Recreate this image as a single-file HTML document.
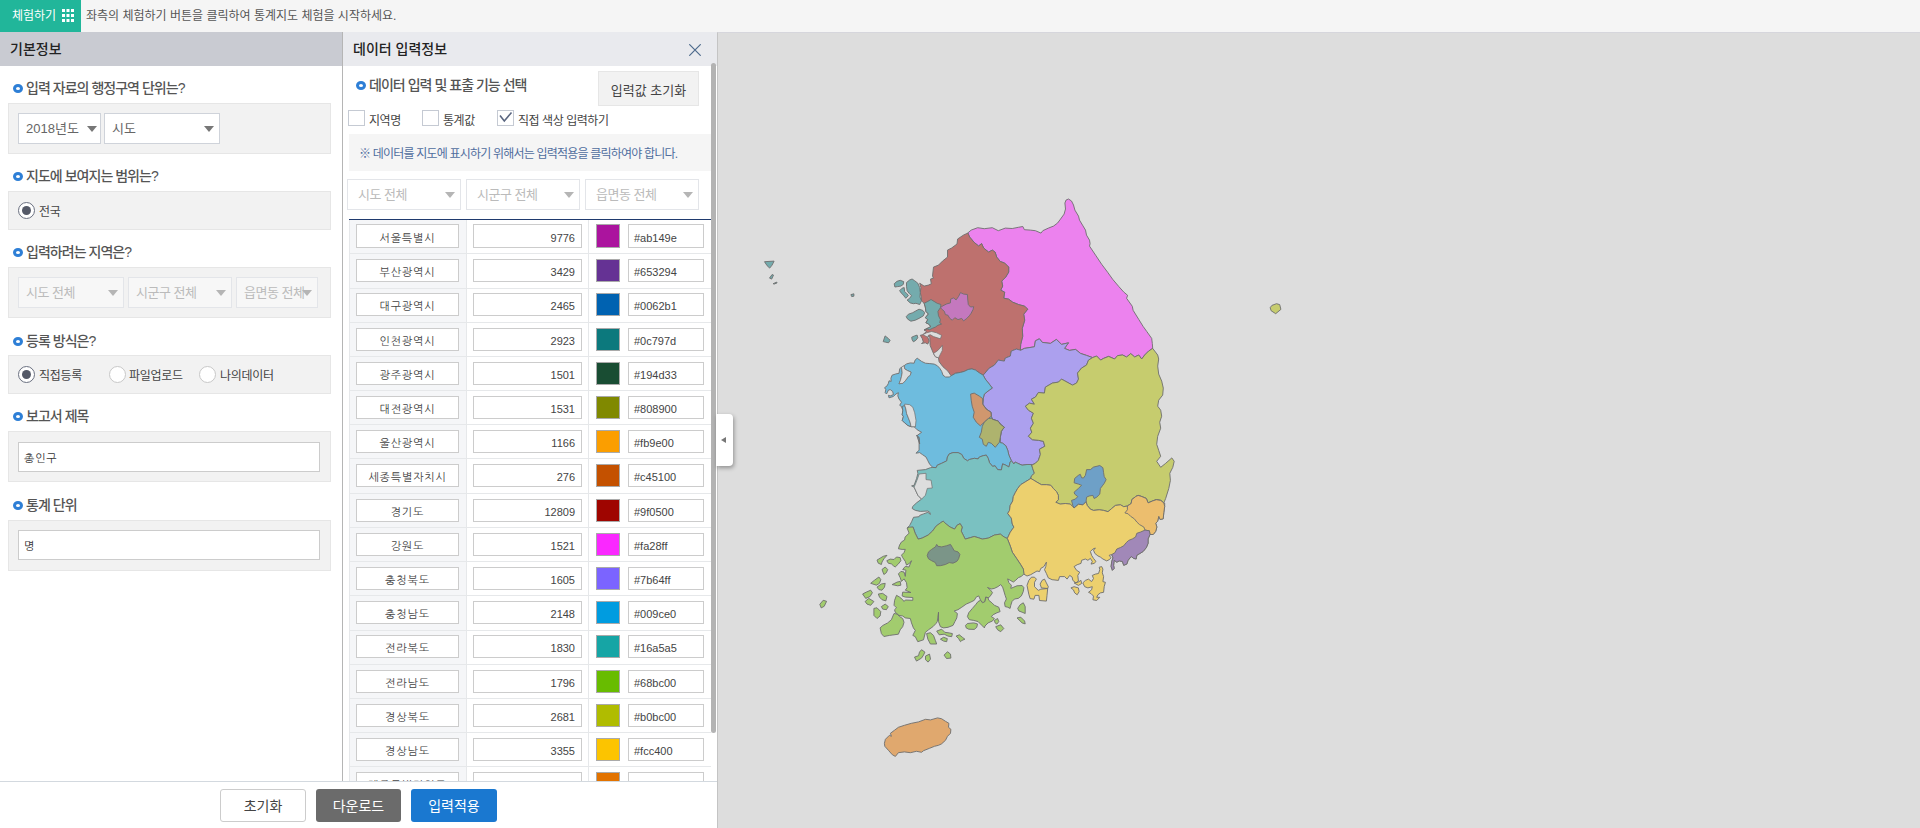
<!DOCTYPE html>
<html lang="ko">
<head>
<meta charset="utf-8">
<title>통계지도 체험</title>
<style>
*{box-sizing:border-box;margin:0;padding:0}
html,body{width:1920px;height:828px;overflow:hidden;background:#fff}
body{font-family:"Liberation Sans","Noto Sans CJK KR","NanumGothic",sans-serif;font-size:12px;color:#333;position:relative}
.abs{position:absolute}
#topbar{left:0;top:0;width:1920px;height:32px;background:#f5f5f5}
#trybtn{left:0;top:0;width:81px;height:32px;background:#21b69a;color:#fff;font-size:12px;line-height:32px;padding-left:12px}
#trybtn svg{position:absolute;left:62px;top:9px}
#toptext{left:86px;top:0;height:32px;line-height:32px;font-size:12px;color:#555}
#left{left:0;top:32px;width:342px;height:750px;background:#fff}
#lefthead{left:0;top:32px;width:343px;height:34px;background:#c9cbd2;font-size:14px;font-weight:500;line-height:34px;padding-left:10px;color:#222}
#vline{left:342px;top:32px;width:1px;height:750px;background:#b5b5b5}
.sec{position:absolute;left:13px;font-size:14px;font-weight:500;color:#555;line-height:20px;white-space:nowrap;letter-spacing:-.97px}
.sec i{display:inline-block;width:10px;height:9px;border:3px solid #2e7fd6;border-radius:50%;vertical-align:0;margin-right:3px}
.gbox{position:absolute;left:8px;width:323px;background:#f2f2f2;border:1px solid #e6e6e6}
.sel{position:absolute;height:31px;background:#fff;border:1px solid #cfd3da;font-size:13px;color:#666;line-height:29px;padding-left:7px;white-space:nowrap;overflow:hidden}
.sel:after{content:"";position:absolute;right:5px;top:12px;border:5px solid transparent;border-top:6px solid #777;border-bottom:0}
.sel.a1:after{right:3px}
.sel.dis{letter-spacing:-.5px;color:#bbb;border-color:#e3e5e9;background:#f7f7f7}
.sel.dis:after{border-top-color:#b5b5b5}
.radio{position:absolute;width:17px;height:17px;border:1px solid #6a7080;border-radius:50%;background:#fff}
.radio.on:after{content:"";position:absolute;left:3px;top:3px;width:9px;height:9px;border-radius:50%;background:#555a68}
.radio.off{border-color:#c8c8c8}
.rl{position:absolute;font-size:12px;color:#444;line-height:16px;white-space:nowrap;letter-spacing:-.3px}
.tin{position:absolute;left:18px;width:302px;height:30px;border:1px solid #ccc;background:#fff;font-size:11px;line-height:30px;padding-left:5px;letter-spacing:.8px;color:#333;font-family:"Liberation Sans","NanumGothic",sans-serif}
#data{left:343px;top:32px;width:374px;height:750px;background:#fff}
#datahead{left:343px;top:32px;width:374px;height:34px;background:#e9eaee;font-size:14px;font-weight:500;line-height:34px;padding-left:10px;color:#222}
#mapwrap{left:717px;top:32px;width:1203px;height:796px;background:#ddd;border-left:1px solid #c4c4c4;border-top:1px solid #d6d6dc}
#bottom{left:0;top:781px;width:717px;height:47px;background:#fff;border-top:1px solid #d3d9df}
.btn{position:absolute;top:7px;height:33px;border-radius:3px;font-size:14px;line-height:35px;text-align:center}
.chk{position:absolute;top:110px;width:17px;height:16px;border:1px solid #c5cad3;background:#fff}
.cl{position:absolute;top:113px;font-size:12px;line-height:17px;color:#444;white-space:nowrap;letter-spacing:-.45px}
.tr{position:absolute;left:349px;width:362px}
.tr>div{position:absolute;top:0;bottom:0}
.c1{left:0;width:118px;background:#f5f6f8;border-left:1px solid #e6e8ea;border-right:1px solid #e6e8ea}
.c2{left:118px;width:122px;border-right:1px solid #e6e8ea}
.c3{left:240px;width:122px}
.inp{position:absolute;top:var(--t);height:var(--h);border:1px solid #ccc;background:#fff;font-size:11px;line-height:var(--lh);color:#444;white-space:nowrap;font-family:"Liberation Sans","NanumGothic",sans-serif}
.i1{left:6px;width:103px;text-align:center;letter-spacing:.9px}
.i2{left:6px;width:109px;text-align:right;padding-right:6px}
.i3{left:39px;width:76px;padding-left:5px}
.sw{position:absolute;left:7px;top:var(--t);width:24px;height:var(--h);border:1px solid #aaa}
</style>
</head>
<body>
<div id="topbar" class="abs"></div>
<div id="trybtn" class="abs">체험하기<svg width="12" height="13" viewBox="0 0 12 13"><g fill="#fff"><rect x="0" y="0" width="3" height="3"/><rect x="4.5" y="0" width="3" height="3"/><rect x="9" y="0" width="3" height="3"/><rect x="0" y="5" width="3" height="3"/><rect x="4.5" y="5" width="3" height="3"/><rect x="9" y="5" width="3" height="3"/><rect x="0" y="10" width="3" height="3"/><rect x="4.5" y="10" width="3" height="3"/><rect x="9" y="10" width="3" height="3"/></g></svg></div>
<div id="toptext" class="abs">좌측의 체험하기 버튼을 클릭하여 통계지도 체험을 시작하세요.</div>

<div id="left" class="abs"></div>
<div id="lefthead" class="abs">기본정보</div>

<div class="sec" style="top:78px"><i></i>입력 자료의 행정구역 단위는?</div>
<div class="gbox" style="top:103px;height:51px"></div>
<div class="sel a1" style="left:18px;top:113px;width:83px">2018년도</div>
<div class="sel" style="left:104px;top:113px;width:116px">시도</div>

<div class="sec" style="top:166px"><i></i>지도에 보여지는 범위는?</div>
<div class="gbox" style="top:191px;height:39px"></div>
<div class="radio on" style="left:18px;top:202px"></div><div class="rl" style="left:39px;top:204px">전국</div>

<div class="sec" style="top:242px"><i></i>입력하려는 지역은?</div>
<div class="gbox" style="top:267px;height:51px"></div>
<div class="sel dis" style="left:18px;top:277px;width:106px">시도 전체</div>
<div class="sel dis" style="left:128px;top:277px;width:104px">시군구 전체</div>
<div class="sel dis" style="left:236px;top:277px;width:82px">읍면동 전체</div>

<div class="sec" style="top:331px"><i></i>등록 방식은?</div>
<div class="gbox" style="top:355px;height:39px"></div>
<div class="radio on" style="left:18px;top:366px"></div><div class="rl" style="left:39px;top:368px">직접등록</div>
<div class="radio off" style="left:109px;top:366px"></div><div class="rl" style="left:129px;top:368px">파일업로드</div>
<div class="radio off" style="left:199px;top:366px"></div><div class="rl" style="left:220px;top:368px">나의데이터</div>

<div class="sec" style="top:406px"><i></i>보고서 제목</div>
<div class="gbox" style="top:431px;height:51px"></div>
<div class="tin" style="top:442px">총인구</div>

<div class="sec" style="top:495px"><i></i>통계 단위</div>
<div class="gbox" style="top:520px;height:51px"></div>
<div class="tin" style="top:530px">명</div>

<div id="data" class="abs"></div>
<div id="datahead" class="abs">데이터 입력정보</div>
<svg class="abs" style="left:689px;top:44px" width="12" height="12" viewBox="0 0 12 12"><path d="M0.3 0.3L11.7 11.7M11.7 0.3L0.3 11.7" stroke="#4d6a8c" stroke-width="1.2" fill="none"/></svg>
<div id="vline" class="abs"></div>

<div class="sec" style="left:356px;top:75px"><i></i>데이터 입력 및 표출 기능 선택</div>
<div class="abs" style="left:598px;top:71px;width:101px;height:35px;background:#f2f2f2;border:1px solid #e6e6e6;font-size:13px;line-height:37px;text-align:center;color:#444">입력값 초기화</div>
<div class="chk" style="left:348px"></div><div class="cl" style="left:369px">지역명</div>
<div class="chk" style="left:422px"></div><div class="cl" style="left:443px">통계값</div>
<div class="chk" style="left:497px"><svg width="16" height="14" viewBox="0 0 16 14" style="position:absolute;left:-1px;top:-1px;overflow:visible"><path d="M3 5.5L7.3 11L14.5 2.5" stroke="#5a6680" stroke-width="1.6" fill="none"/></svg></div><div class="cl" style="left:518px">직접 색상 입력하기</div>
<div class="abs" style="left:349px;top:134px;width:362px;height:37px;background:#f5f5f5;font-size:12px;line-height:40px;padding-left:10px;color:#4f6d9e;white-space:nowrap;letter-spacing:-.8px">※ 데이터를 지도에 표시하기 위해서는 입력적용을 클릭하여야 합니다.</div>
<div class="sel dis" style="left:347px;top:179px;width:114px;background:#fff;padding-left:10px">시도 전체</div>
<div class="sel dis" style="left:466px;top:179px;width:114px;background:#fff;padding-left:10px">시군구 전체</div>
<div class="sel dis" style="left:585px;top:179px;width:114px;background:#fff;padding-left:10px">읍면동 전체</div>
<div class="abs" style="left:349px;top:219px;width:362px;height:1px;background:#1f3a6e"></div>
<div class="tr" style="top:220px;height:33px;--t:4px;--h:24px;--lh:26px"><div class="c1"><span class="inp i1">서울특별시</span></div><div class="c2"><span class="inp i2">9776</span></div><div class="c3"><i class="sw" style="background:#ab149e"></i><span class="inp i3">#ab149e</span></div></div>
<div class="tr" style="top:253px;height:35px;border-top:1px solid #e6e8ea;--t:5px;--h:23px;--lh:24px"><div class="c1"><span class="inp i1">부산광역시</span></div><div class="c2"><span class="inp i2">3429</span></div><div class="c3"><i class="sw" style="background:#653294"></i><span class="inp i3">#653294</span></div></div>
<div class="tr" style="top:288px;height:34px;border-top:1px solid #e6e8ea;--t:4px;--h:23px;--lh:24px"><div class="c1"><span class="inp i1">대구광역시</span></div><div class="c2"><span class="inp i2">2465</span></div><div class="c3"><i class="sw" style="background:#0062b1"></i><span class="inp i3">#0062b1</span></div></div>
<div class="tr" style="top:322px;height:34px;border-top:1px solid #e6e8ea;--t:5px;--h:23px;--lh:24px"><div class="c1"><span class="inp i1">인천광역시</span></div><div class="c2"><span class="inp i2">2923</span></div><div class="c3"><i class="sw" style="background:#0c797d"></i><span class="inp i3">#0c797d</span></div></div>
<div class="tr" style="top:356px;height:34px;border-top:1px solid #e6e8ea;--t:5px;--h:23px;--lh:24px"><div class="c1"><span class="inp i1">광주광역시</span></div><div class="c2"><span class="inp i2">1501</span></div><div class="c3"><i class="sw" style="background:#194d33"></i><span class="inp i3">#194d33</span></div></div>
<div class="tr" style="top:390px;height:34px;border-top:1px solid #e6e8ea;--t:5px;--h:23px;--lh:24px"><div class="c1"><span class="inp i1">대전광역시</span></div><div class="c2"><span class="inp i2">1531</span></div><div class="c3"><i class="sw" style="background:#808900"></i><span class="inp i3">#808900</span></div></div>
<div class="tr" style="top:424px;height:34px;border-top:1px solid #e6e8ea;--t:5px;--h:23px;--lh:24px"><div class="c1"><span class="inp i1">울산광역시</span></div><div class="c2"><span class="inp i2">1166</span></div><div class="c3"><i class="sw" style="background:#fb9e00"></i><span class="inp i3">#fb9e00</span></div></div>
<div class="tr" style="top:458px;height:35px;border-top:1px solid #e6e8ea;--t:5px;--h:23px;--lh:24px"><div class="c1"><span class="inp i1">세종특별자치시</span></div><div class="c2"><span class="inp i2">276</span></div><div class="c3"><i class="sw" style="background:#c45100"></i><span class="inp i3">#c45100</span></div></div>
<div class="tr" style="top:493px;height:34px;border-top:1px solid #e6e8ea;--t:5px;--h:23px;--lh:24px"><div class="c1"><span class="inp i1">경기도</span></div><div class="c2"><span class="inp i2">12809</span></div><div class="c3"><i class="sw" style="background:#9f0500"></i><span class="inp i3">#9f0500</span></div></div>
<div class="tr" style="top:527px;height:34px;border-top:1px solid #e6e8ea;--t:5px;--h:23px;--lh:24px"><div class="c1"><span class="inp i1">강원도</span></div><div class="c2"><span class="inp i2">1521</span></div><div class="c3"><i class="sw" style="background:#fa28ff"></i><span class="inp i3">#fa28ff</span></div></div>
<div class="tr" style="top:561px;height:34px;border-top:1px solid #e6e8ea;--t:5px;--h:23px;--lh:24px"><div class="c1"><span class="inp i1">충청북도</span></div><div class="c2"><span class="inp i2">1605</span></div><div class="c3"><i class="sw" style="background:#7b64ff"></i><span class="inp i3">#7b64ff</span></div></div>
<div class="tr" style="top:595px;height:35px;border-top:1px solid #e6e8ea;--t:5px;--h:23px;--lh:24px"><div class="c1"><span class="inp i1">충청남도</span></div><div class="c2"><span class="inp i2">2148</span></div><div class="c3"><i class="sw" style="background:#009ce0"></i><span class="inp i3">#009ce0</span></div></div>
<div class="tr" style="top:630px;height:34px;border-top:1px solid #e6e8ea;--t:4px;--h:23px;--lh:24px"><div class="c1"><span class="inp i1">전라북도</span></div><div class="c2"><span class="inp i2">1830</span></div><div class="c3"><i class="sw" style="background:#16a5a5"></i><span class="inp i3">#16a5a5</span></div></div>
<div class="tr" style="top:664px;height:34px;border-top:1px solid #e6e8ea;--t:5px;--h:23px;--lh:24px"><div class="c1"><span class="inp i1">전라남도</span></div><div class="c2"><span class="inp i2">1796</span></div><div class="c3"><i class="sw" style="background:#68bc00"></i><span class="inp i3">#68bc00</span></div></div>
<div class="tr" style="top:698px;height:34px;border-top:1px solid #e6e8ea;--t:5px;--h:23px;--lh:24px"><div class="c1"><span class="inp i1">경상북도</span></div><div class="c2"><span class="inp i2">2681</span></div><div class="c3"><i class="sw" style="background:#b0bc00"></i><span class="inp i3">#b0bc00</span></div></div>
<div class="tr" style="top:732px;height:34px;border-top:1px solid #e6e8ea;--t:5px;--h:23px;--lh:24px"><div class="c1"><span class="inp i1">경상남도</span></div><div class="c2"><span class="inp i2">3355</span></div><div class="c3"><i class="sw" style="background:#fcc400"></i><span class="inp i3">#fcc400</span></div></div>
<div class="tr" style="top:766px;height:34px;border-top:1px solid #e6e8ea;--t:5px;--h:23px;--lh:24px"><div class="c1"><span class="inp i1">제주특별자치도</span></div><div class="c2"><span class="inp i2">667</span></div><div class="c3"><i class="sw" style="background:#e27300"></i><span class="inp i3">#e27300</span></div></div>
<div class="abs" style="left:711px;top:63px;width:5px;height:670px;background:#b3b3b3;border-radius:3px"></div>

<div id="mapwrap" class="abs"></div>
<svg class="abs" id="map" style="left:0;top:0" width="1920" height="828" viewBox="0 0 1920 828"><g stroke="#6e6e6e" stroke-width="0.9" stroke-linejoin="miter" stroke-miterlimit="3">
<path fill="#ec82ee" d="M967.6 233.1L971.2 230.1L977.7 227.7L984.3 228.7L992.3 227.7L998.3 230.7L1005.3 228.1L1012.3 228.5L1018.4 227.3L1022.8 226.5L1024.4 229.7L1030.4 230.1L1035.4 230.7L1041 233.1L1042.8 230.7L1048.4 228.1L1053.5 226.1L1057.5 223.1L1060.5 219.1L1064.1 214.1L1065.5 209L1064.9 203L1066.1 200L1068.5 199L1071.5 201L1073.5 205L1074.9 210.1L1078.5 216.1L1079.5 220.1L1082.5 225.1L1085.5 230.1L1086.5 235.1L1089.5 240.1L1090.1 243.7L1089.5 246.1L1095.6 255.2L1101.6 264.2L1107.6 272.2L1112.6 279.2L1118.6 286.3L1123.6 291.9L1127.6 295.3L1126.6 298.3L1132.3 306.3L1133.1 310.3L1138.7 319.3L1143.1 326.4L1146.7 331.4L1151.7 338.4L1152.3 343.4L1152.7 348.4L1148.7 351L1144.7 355L1141.7 359L1138.7 355L1134.7 357L1130.7 353.6L1126.6 357L1122.6 355L1117.6 355.6L1114.6 359L1108.6 356.4L1103.6 358.4L1100.6 360.1L1096.6 356L1092.6 357.6L1086.5 355.4L1080.5 353.4L1075.5 349.4L1069.5 350.4L1064.5 348.4L1068.5 342.8L1061.5 344.4L1056.5 339.4L1050.4 343.4L1042.4 342.4L1039.4 338.8L1035.4 340.8L1034.4 346.8L1024.4 348.4L1020.4 350.4L1020.7 344.3L1022.7 336.3L1022.3 328.3L1024.7 320.2L1023.7 314.2L1027.7 309.2L1024.7 306.2L1018.7 304.6L1012.7 302.2L1008.7 299.2L1003.7 298.2L1004.7 292.2L1000.7 290.2L1002.7 286.1L1001.7 281.1L1005.7 277.1L1008.7 272.1L1008.7 267.1L1004.7 263.1L1000.3 261.5L996.7 257.1L995.1 252.1L992.3 250.1L988.6 252.1L983.6 248L981.6 243.6L978.6 246L974.2 242.4L969.6 237Z"/>
<path fill="#be716e" d="M968 233L963.6 235L957.6 239L957 244L951.6 248L947.5 250.1L947.5 257.1L942.5 261.1L938.5 265.1L933.5 267.1L932.5 276.1L933.5 278.1L930.5 279.1L931.3 283.8L928.4 285.1L924.1 286.1L919.7 283.2L920.9 287.6L920.3 292.6L921.3 297L921.5 300.8L924.1 303.3L925.3 307L925.9 311.4L928.4 314L925.3 317.7L927.8 319.6L925.9 322.7L928.4 324L931 326.5L928.4 327.8L924.1 330L926.6 331.5L922.8 334.7L920.3 335.3L922.2 338.4L923.4 342.2L921.5 343.5L925.3 342.8L927.8 344.1L929.1 341L927.8 337.2L928.8 335.6L929.8 337.8L930.1 345.4L933.5 353.5L935.4 356.7L938.5 357.9L939.1 361.7L942.9 366.7L947.9 371.1L951.1 375.8L955.5 373.3L960.6 372.4L964.3 371.4L968.1 369.5L971.9 368.9L975.6 370.1L979.4 372.9L983.2 375.2L989.2 368.2L994.3 365.2L998.3 360.1L1004.3 361.1L1005.3 358.1L1010.3 356.1L1011.3 351.1L1016.3 349.1L1020.3 350.1L1020.7 344.3L1022.7 336.3L1022.3 328.3L1024.7 320.2L1023.7 314.2L1027.7 309.2L1024.7 306.2L1018.7 304.6L1012.7 302.2L1008.7 299.2L1003.7 298.2L1004.7 292.2L1000.7 290.2L1002.7 286.1L1001.7 281.1L1005.7 277.1L1008.7 272.1L1008.7 267.1L1004.7 263.1L1000.3 261.5L996.7 257.1L995.1 252.1L992.3 250.1L988.6 252.1L983.6 248L981.6 243.6L978.6 246L974.2 242.4L969.6 237Z"/>
<path fill="#aca0ee" d="M1020.4 350.4L1024.4 348.4L1034.4 346.8L1035.4 340.8L1039.4 338.8L1042.4 342.4L1050.4 343.4L1056.5 339.4L1061.5 344.4L1068.5 342.8L1064.5 348.4L1069.5 350.4L1075.5 349.4L1080.5 353.4L1086.5 355.4L1092.6 357.6L1088.5 360.1L1086.5 365.1L1081.5 368.1L1077.5 373.1L1078.5 379.1L1076.5 383.1L1072.5 385.1L1061.5 379.1L1058.5 382.1L1052.4 383.1L1045.4 387.1L1044.4 393.1L1038.4 392.5L1035.4 397.1L1031.4 399.2L1034.4 404.2L1029.4 403.2L1025.4 406.2L1028.4 410.2L1033.4 413.2L1031.4 418.2L1033.4 423.2L1030.4 428.2L1031.8 432.2L1028.4 436.3L1032.4 439.7L1038.4 440.3L1043.4 441.3L1044.8 446.3L1039.4 449.3L1040.4 454.3L1038.4 460.3L1035.4 463.3L1031.4 465.3L1027.1 464.5L1022.1 465.2L1017.7 463.3L1015.2 462L1013.9 463.9L1011.4 460.8L1008.9 455.1L1007.7 450.1L1005.8 445.7L1002.6 443.2L1000.1 442.6L1000.3 437.3L1001.3 431.2L1004.3 427.2L1000.3 424.2L998.3 421.2L992.3 419.2L991.3 416.2L990.9 412.2L986.3 409.2L982.7 404.2L983.3 398.2L984.3 394.1L989.3 390.1L992.3 388.1L989.3 384.1L985.3 379.1L983.2 375.2L989.2 368.2L994.3 365.2L998.3 360.1L1004.3 361.1L1005.3 358.1L1010.3 356.1L1011.3 351.1L1016.3 349.1L1020.3 350.1Z"/>
<path fill="#6ebcde" d="M951.1 375.8L949.3 377L945.5 377L943 375.2L941.7 371.4L939.8 368.3L937.3 365.7L934.2 364.1L929.8 363.6L925.4 363.2L921.6 361.4L917.2 358.2L915.1 360.1L914.1 363.2L910.3 362.9L906.6 363.9L904.1 365.7L904.7 368.9L907.8 370.8L911 372L910.3 375.2L908.4 376.4L906.6 378.9L905.3 380.8L902.8 383.3L899 383.7L900.3 380.8L901.5 376.4L902.2 372.7L901.5 367L899.7 368.9L899 373.3L895.9 373.9L892.1 375.2L890.9 378.3L891.2 381.4L889 380.8L888.4 383.3L887.1 385.8L884.6 387.7L885.8 389.6L885.2 392.7L886.5 394L888.4 390.2L890.2 389.6L892.7 391.5L893.4 394.6L890.2 395.9L888.4 395.3L889 397.8L893.4 396.5L895.9 394L898.4 392.7L897.8 395.9L899 399L901.5 402.2L899.7 405.3L901.5 406.6L902.8 410.3L902.2 414.7L903.4 416.6L902.2 420.4L904.7 422.9L907.8 425.4L911 426.7L915.4 426.7L914.7 427.3L917.2 429.8L921.6 432.3L917.2 435.4L919.1 438.6L919.7 444L916.6 435L919.1 437.5L919.1 450.1L916 453.2L919.7 452.6L922.3 454.5L926 457L927.9 460.8L929.8 464.5L932.9 467.4L936.1 467.7L937.3 465.2L941.7 463.3L946.8 460.8L947.4 457L949.3 453.9L953 452.6L958.1 452.6L961.8 454.5L963.7 458.3L967.5 460.8L969.4 459.5L974.4 458.3L978.1 458.9L979.4 457L983.2 455.7L986.3 455.1L988.2 458.3L989.5 462.7L992.6 466.4L995.1 465.8L997.6 469.6L1001.4 469.9L1002.6 463.9L1005.8 465.2L1008.9 467L1010.2 462L1011.4 460.8L1008.9 455.1L1007.7 450.1L1005.8 445.7L1002.6 443.2L1000.1 442.6L1000.3 437.3L1001.3 431.2L1004.3 427.2L1000.3 424.2L998.3 421.2L992.3 419.2L991.3 416.2L990.9 412.2L986.3 409.2L982.7 404.2L983.3 398.2L984.3 394.1L989.3 390.1L992.3 388.1L989.3 384.1L985.3 379.1L983.2 375.2L983.2 375.2L979.4 372.9L975.6 370.1L971.9 368.9L968.1 369.5L964.3 371.4L960.6 372.4L955.5 373.3L951.1 375.8Z"/>
<path fill="#7ac1c1" d="M932.9 467.4L930.4 467.7L925.4 469.6L917.2 470.4L917.9 473.3L916.6 478.4L914.1 485.3L911.6 485.9L914.1 487.1L917.9 495.3L921.6 499.1L916.6 502.8L912.6 506.6L912.2 508.5L915.4 510.4L920.4 511.4L927.9 511L929.8 512.3L930.4 514.4L927.9 512.3L923.5 513.9L919.7 515.4L919.1 516.7L913.5 517.3L911.6 521.7L909.7 525.4L907.2 528L913.1 527.1L915.1 533.1L918.1 539.1L922.1 538.1L928.1 535.1L932.5 531.1L936.1 526.1L940.2 523.1L943.2 521.1L946.2 524.1L950.2 527.1L954.6 529.1L957.2 525.1L960.2 523.7L962.2 527.1L961.2 531.1L963.2 535.1L965.2 539.1L970.2 537.7L974.2 536.5L978.3 537.7L982.3 539.1L988.3 538.1L994.3 535.1L1000.3 534.1L1004.3 537.1L1007.3 538.5L1010.3 532.1L1013.9 527.1L1012.3 524.1L1011.3 518.1L1010.2 516.7L1007.7 513.5L1009.5 510.4L1010.2 505.4L1012.7 501L1013.3 496.6L1015.2 492.8L1017.7 488.4L1020.8 484.6L1025.9 481.5L1030.9 478.4L1031.5 475.8L1034.4 473.3L1032.8 468.9L1031.5 464.5L1027.1 464.5L1022.1 465.2L1017.7 463.3L1015.2 462L1013.9 463.9L1011.4 460.8L1011.4 460.8L1010.2 462L1008.9 467L1005.8 465.2L1002.6 463.9L1001.4 469.9L997.6 469.6L995.1 465.8L992.6 466.4L989.5 462.7L988.2 458.3L986.3 455.1L983.2 455.7L979.4 457L978.1 458.9L974.4 458.3L969.4 459.5L967.5 460.8L963.7 458.3L961.8 454.5L958.1 452.6L953 452.6L949.3 453.9L947.4 457L946.8 460.8L941.7 463.3L937.3 465.2L936.1 467.7Z"/>
<path fill="#c6cc6e" d="M1092.6 357.6L1096.6 356L1100.6 360.1L1103.6 358.4L1108.6 356.4L1114.6 359L1117.6 355.6L1122.6 355L1126.6 357L1130.7 353.6L1134.7 357L1138.7 355L1141.7 359L1144.7 355L1148.7 351L1152.7 348.4L1157.7 355L1158.7 359L1157.7 366.1L1158.7 374.1L1161.7 381.1L1163.3 388.1L1162.7 395.1L1158.7 400.2L1157.7 406.2L1160.7 410.2L1161.7 416.2L1159.7 422.2L1160.7 428.2L1157.7 436.3L1156.7 444.3L1158.7 450.3L1160.7 456.3L1156.7 461.3L1160.7 467.3L1165.7 463.3L1171.8 457.9L1174.2 461.3L1172.8 467.3L1169.8 473.3L1170.4 480.4L1168.8 488.4L1165.7 498.4L1163.8 502.9L1163.8 502.9L1160.7 500.4L1156.3 499.7L1152.5 501L1148.1 502.9L1146.3 498.5L1141.9 496.6L1138.1 495.4L1135.6 496.6L1131.8 499.7L1131.2 503.5L1127.4 506L1123.7 506.7L1120.5 504.8L1115.5 505.4L1111.7 508.5L1108 511.7L1103.6 510.4L1099.2 509.8L1093.5 510.4L1090.4 509.2L1087.2 505.4L1086 501.6L1082.8 504.8L1078.4 504.1L1074.1 507.9L1072.8 506.7L1070.3 504.1L1065.3 503.5L1060.2 504.1L1055.8 502.3L1058.4 499.7L1058.4 495.4L1056.5 491.6L1053.3 488.4L1050.8 485.3L1046.4 484.7L1041.4 484.7L1037 482.2L1033.9 480.3L1030.7 478.4L1031.5 475.8L1034.4 473.3L1032.8 468.9L1031.5 464.5L1031.4 465.3L1035.4 463.3L1038.4 460.3L1040.4 454.3L1039.4 449.3L1044.8 446.3L1043.4 441.3L1038.4 440.3L1032.4 439.7L1028.4 436.3L1031.8 432.2L1030.4 428.2L1033.4 423.2L1031.4 418.2L1033.4 413.2L1028.4 410.2L1025.4 406.2L1029.4 403.2L1034.4 404.2L1031.4 399.2L1035.4 397.1L1038.4 392.5L1044.4 393.1L1045.4 387.1L1052.4 383.1L1058.5 382.1L1061.5 379.1L1072.5 385.1L1076.5 383.1L1078.5 379.1L1077.5 373.1L1081.5 368.1L1086.5 365.1L1088.5 360.1L1092.6 357.6Z"/>
<path fill="#ecd06e" d="M1164.7 503.1L1164.7 506.3L1163.8 512.6L1163.2 518.8L1160.1 519.5L1158.8 516.3L1157.6 521.4L1155.7 523.2L1156.9 527L1155.7 531.4L1153.2 534.5L1150 534.5L1148.1 538.9L1148.1 543.3L1146.3 547.7L1143.1 551.5L1140 553.4L1136.8 555.3L1136.2 559L1133.7 558.4L1131.2 556.5L1128.1 560.3L1126.8 564.1L1123.7 565.3L1122.4 561.5L1119.3 560.9L1116.8 562.2L1114.2 560.3L1113.6 565.3L1114.2 568.4L1112.4 570.3L1111.1 566.6L1111.7 561.5L1113 557.8L1111.7 554.6L1109.2 555.3L1111.1 557.8L1109.2 559.7L1106.7 560.9L1102.9 559L1100.4 557.1L1097.9 555.9L1094.8 553.4L1093.5 550.2L1095.4 548L1092.9 549L1090.4 551.5L1091.6 555.3L1093.5 558.4L1096 561.5L1094.1 563.4L1091 564.1L1092.3 561.5L1090.4 558.4L1087.9 560.3L1085.4 559L1081.6 560.3L1081 563.4L1077.2 564.7L1074.1 566.6L1076.6 570.3L1079.7 572.2L1077.8 575.4L1078.4 581L1075.9 582.9L1072.8 580.4L1072.2 577.2L1069.7 575.4L1067.1 579.1L1064.6 576.6L1059.6 576.6L1058.4 580.4L1052.1 579.7L1048.3 577.9L1046.4 573.5L1044.5 569.7L1045.8 566.6L1046.4 562.2L1043.9 566.6L1040.8 568.4L1039.5 571.6L1037 571L1033.9 572.8L1030.7 574.7L1027 576L1023.8 574.1L1023.4 569.2L1020.4 564.2L1016.4 558.2L1012.3 552.2L1010.3 546.1L1007.3 538.5L1010.3 532.1L1013.9 527.1L1012.3 524.1L1011.3 518.1L1010.2 516.7L1007.7 513.5L1009.5 510.4L1010.2 505.4L1012.7 501L1013.3 496.6L1015.2 492.8L1017.7 488.4L1020.8 484.6L1025.9 481.5L1030.9 478.4L1030.7 478.4L1033.9 480.3L1037 482.2L1041.4 484.7L1046.4 484.7L1050.8 485.3L1053.3 488.4L1056.5 491.6L1058.4 495.4L1058.4 499.7L1055.8 502.3L1060.2 504.1L1065.3 503.5L1070.3 504.1L1072.8 506.7L1074.1 507.9L1078.4 504.1L1082.8 504.8L1086 501.6L1087.2 505.4L1090.4 509.2L1093.5 510.4L1099.2 509.8L1103.6 510.4L1108 511.7L1111.7 508.5L1115.5 505.4L1120.5 504.8L1123.7 506.7L1127.4 506L1131.2 503.5L1131.8 499.7L1135.6 496.6L1138.1 495.4L1141.9 496.6L1146.3 498.5L1148.1 502.9L1152.5 501L1156.3 499.7L1160.7 500.4L1163.8 502.9Z"/>
<path fill="#a2cc6e" d="M1023.9 573.9L1021.4 576.4L1018.3 577.7L1015.8 580.2L1013.3 582.1L1010.1 580.2L1007.6 578.9L1008.9 582.7L1011.4 585.2L1010.8 588.4L1013.9 587.1L1017 585.8L1022.1 585.5L1023.9 587.7L1023.3 591.5L1021.4 595.9L1018.3 598.4L1014.5 599L1012 601.5L1010.8 605.3L1010.1 608.4L1007.6 607.2L1005.1 606.6L1004.5 602.8L1006.4 599L1005.1 595.3L1003.8 590.9L1002.6 587.1L1000.7 584.6L998.2 586.5L994.4 588.4L991.3 589L987.5 587.5L990.7 590.2L992.5 592.7L990 596.5L988.1 597.8L985.6 597.1L985 601.5L983.1 602.8L980.6 600.3L978.7 595.9L976.2 597.1L974.3 600.3L970.6 602.2L966.2 604.1L961.8 607.2L958 609.7L954.2 611L957.4 613.5L956.8 617.9L954.9 621.6L953 625.4L948 627.3L943.6 627.9L940.4 626.7L938.5 621.6L938.5 612.2L937.3 621.6L936 623.5L932.9 626.7L928.5 629.8L925.4 632.3L923.5 639.8L917.8 641.7L915.3 636.7L912.8 635.4L915.3 630.4L913.4 627.9L911.5 622.9L910.3 618.5L905.3 617.9L902.7 616L899 615.4L895.2 612.2L894.6 609.7L896.5 607.8L894 605.3L894.6 600.3L896.5 595.3L899.6 597.1L902.7 599.7L904 601.5L905.3 600L912.8 600.3L912.8 597.5L905.3 597.1L902.1 595.9L902.7 592.1L910.9 592.5L905.3 590.2L907.1 587.7L906.5 582.7L904 578.9L901.5 581.4L900.2 577.7L898.4 573.9L900.9 571.4L904 572L905.3 576.4L905.9 570.1L902.7 569.5L905.3 566.4L909 567L911.5 560.7L909.7 563.2L906.5 565.1L905.3 561.4L902.7 557.6L901.5 555.1L904 552.6L905.3 549.4L902.1 549.4L898.4 548.8L899.6 545L901.5 541.9L904.6 540L905.1 537.1L909.1 533.1L907.1 528.1L909.7 527.1L913.1 527.1L915.1 533.1L918.1 539.1L922.1 538.1L928.1 535.1L932.5 531.1L936.1 526.1L940.2 523.1L943.2 521.1L946.2 524.1L950.2 527.1L954.6 529.1L957.2 525.1L960.2 523.7L962.2 527.1L961.2 531.1L963.2 535.1L965.2 539.1L970.2 537.7L974.2 536.5L978.3 537.7L982.3 539.1L988.3 538.1L994.3 535.1L1000.3 534.1L1004.3 537.1L1007.3 538.5L1007.3 538.5L1010.3 546.1L1012.3 552.2L1016.4 558.2L1020.4 564.2L1023.4 569.2Z"/>
<path fill="#a2cc6e" d="M877 560.1L880.1 558.2L883.3 556.3L887 555.3L883.9 558.8L882 562L881.4 564.5L878.3 563.2ZM886.8 560.7L890.2 559.1L894 559.5L896.5 557L900.2 557.6L900.9 560.7L898.4 563.9L895.2 567L893.3 565.7L891.4 563.9L888.3 563.2ZM882 569.5L885.2 567L887.7 569.5L886.4 572.7L883.9 574.5ZM870.7 583.3L874.5 580.2L878.9 577L880.8 579.6L879.5 583.3L876.4 585.2ZM877 587.1L881.4 584L885.2 583.3L884.5 587.1L882 590.2L878.9 589.6ZM892.1 584.6L897.1 582.1L900.2 581.4L900.9 585.2L897.7 585.8ZM862.6 594L866.3 592.1L870.7 590.2L872.4 592.7L870.1 596.5L865.7 598.4ZM865.1 601.5L868.8 598.4L873.9 601.5L870.7 605.3L867 604.1ZM878.3 594L882.7 593.4L887 596.5L885.8 600.9L882 599.7L879.5 597.1ZM881.4 606.6L885.2 604.1L888.3 606.6L886.4 609.7L882.7 609.1ZM873.9 608.4L877 607.8L880.8 611.6L880.1 616L877 618.5L873.9 615.4ZM880.1 627.9L882.9 625.4L887.7 622.9L891.4 619.7L894 613.5L897.1 614.1L899.6 616.6L902.7 618.5L904 622.3L902.7 626.7L900.2 629.8L898.4 634.2L894 634.8L889.6 635.4L883.9 636.5L881.4 633.6ZM967.4 616.6L968.7 612.8L972.4 608.4L975.6 604.7L978.1 601.5L980.6 600.3L982.5 602.8L985 601.5L985.9 597.1L988.1 597.8L988.8 600.3L991.9 602.8L994.4 605.3L998.8 607.2L1000.1 611.6L996.9 612.8L993.2 614.7L991.3 616.6L994.4 618.5L992.5 621L988.1 622.9L985 626L984.4 627.9L981.9 625.4L978.1 621.6L973.7 620.4L969.3 619.7ZM965.5 625.4L967.4 623.5L973.7 622.9L977.5 623.9L976.8 627.3L974.3 629.4L968.7 629.2L966.2 627.9ZM994.4 620.4L997.6 618.5L998.8 621.6L996.9 624.1L995.1 622.9ZM995.7 626.7L1000.7 624.8L1003.8 628.5L1000.7 631.7L997.6 629.8ZM1017 617.9L1020.8 617.2L1024.6 621L1025.2 623.9L1022.1 622.9ZM1017.7 608.4L1020.2 604.7L1023.3 602.8L1025.2 606.6L1025.2 613.5L1022.1 612.2L1018.9 611ZM926.6 633.6L930.4 632.7L933.5 635.4L935.4 640.5L936.7 644L930.4 644L927.9 639.2ZM936.7 631.1L941.7 629.2L944.8 632.3L949.2 632.9L952.4 633.6L951.7 636.7L948 636.1L944.2 634.2L939.2 634.8ZM940.4 639.2L943.6 637.3L947.3 638.6L946.7 641.7L943.6 641.1ZM956.1 636.1L959.3 634.8L962.4 637.3L964.9 639.2L961.8 640.5L960.5 641.7L958.6 638.6ZM819.8 604.3L823.2 600.3L826.6 601.3L824.2 606.3L821.2 607.9ZM914.5 657.1L918.5 655.7L919.5 652.1L921.5 649.7L924.9 652.1L923.5 655.1L921.5 658.1L916.5 661.1ZM925.5 656.1L929.5 654.1L930.5 659.1L928.1 662.1L925.5 659.7ZM944.1 655.1L947.5 651.7L950.5 654.1L950.9 658.1L946.5 658.5Z"/>
<path fill="#ecd06e" d="M1082.8 582.9L1085.4 580.4L1088.5 579.1L1091.6 581.6L1093.5 578.5L1092.3 575.4L1095.4 574.1L1098.5 573.5L1099.8 569.7L1099.2 567.2L1101.7 566.6L1102.9 569.1L1102.3 572.8L1103.6 576.6L1102.9 581.6L1105.4 582.3L1104.2 586.7L1103.6 592.3L1100.4 592.9L1097.9 594.8L1096.7 597.3L1099.8 597.3L1096.7 600.5L1092.9 599.8L1093.5 596.1L1091 593.6L1088.5 592.3L1091.6 589.8L1092.3 586.7L1087.9 587.9L1084.7 586.7ZM1070.9 587.9L1074.1 586.7L1078.4 587.9L1079.1 591.7L1077.2 594.8L1074.7 592.9L1073.4 589.8ZM1074.1 582.9L1077.8 582.3L1081 580.4L1081.6 583.5L1078.4 585.4ZM1027 585.4L1028.8 580.4L1031.4 577.2L1034.5 577.2L1036.4 579.1L1034.5 582.3L1034.5 586.7L1038.3 590.4L1040.8 589.2L1047.7 588.5L1047 595.4L1046.4 601.1L1039.5 600.5L1038.9 595.4L1035.1 595.4L1033.9 599.2L1030.1 598.6L1028.8 594.2ZM1040.1 584.1L1042 580.4L1044.5 579.1L1046.4 582.9L1048.3 586.7L1047.7 588.5L1041.4 587.9Z"/>
<path fill="#6ebcde" d="M902.2 406.6L904.7 405.3L905.9 409.1L906.6 413.5L908.4 417.9L910.3 422.9L911 426.7L907.8 425.4L904.7 422.9L902.2 420.4L903.4 416.6L902.2 414.7L902.8 410.3Z"/>
<g stroke-width="0.7">
<path fill="#dddddd" d="M904.7 404.1L909.7 404.7L912.8 407.2L914.7 412.8L916 420.4L915.4 426.7L911 426.7L910.3 422.9L908.4 417.9L906.6 413.5L905.9 409.1L904.7 405.3ZM922.8 334.7L926.6 332.8L931.6 331.5L936.6 332.8L941.6 335.3L940.4 338.8L933.5 336.6L930.3 334.7L928.4 335.3L927.8 337.2ZM933.5 353.5L937.9 350.4L942.3 345.4L942.3 350.4L938.5 357.9L935.4 356.7ZM904.1 365.7L904.7 368.9L907.8 370.8L911 372L910.3 375.2L908.4 376.4L906.6 378.9L905.3 380.8L902.8 383.3L899 383.7L900.3 380.8L901.5 376.4L902.2 372.7L901.5 367ZM919.1 474L926 473.3L926 479.6L931.1 480.2L932.3 488L927.3 488.4L925.4 495.3L921.6 499.1L917.9 495.3L914.1 487.1L916 482.7L917.9 477.7Z"/>
</g>
<path fill="#c478be" d="M940.4 307.7L942.9 305.8L946.7 303.9L950.4 302.9L950.7 299.1L953.6 297.9L956.1 299.9L958.6 296.4L960.5 292.6L963.6 294.1L967.4 294.5L967.8 300.1L968.3 304.5L970.5 307L973.7 306.7L973 309.6L971.1 313.3L969.3 315.8L966.8 318.4L963.6 320.9L961.7 318.4L958 319.6L954.8 317.7L952.3 320.2L949.8 318.4L947.9 315.2L945.4 314.6L944.4 311.4L942.3 309.6Z"/>
<path fill="#74abad" d="M924.1 303.3L927.8 301.4L931 299.5L934.1 301.4L937.2 303.3L941 304.5L940.4 307.7L937.9 311.4L938.5 315.8L940.4 319.6L939.7 322.7L941.6 324L937.9 325.3L935.4 327.1L932.2 328.4L929.7 329.7L927.2 329L924.1 330L928.4 327.8L931 326.5L928.4 324L925.9 322.7L927.8 319.6L925.3 317.7L928.4 314L925.9 311.4L925.3 307ZM906.5 282.6L909.6 280L912.1 279L914.6 280.7L917.8 283.2L919.7 287.6L920.3 292.6L920 297L921.5 300.8L919.7 304.5L915.9 303.3L913.4 303.7L910.2 302.9L907.1 300.1L909.6 298.3L911.5 295.7L909 293.2L907.1 290.7L906.5 286.3ZM894.2 283.8L897 281.3L900.2 280.3L903.7 281.6L903.3 284.4L900.8 286.1L897.7 286.6L894.9 287ZM899.6 290.7L902.1 288.2L904.2 287.6L904.6 291.4L907.1 293.9L908.4 295.7L905.8 298.3L903.3 295.1L901.4 293.2ZM906.2 316.7L908.4 314.2L912.7 312.7L917.1 310.2L919 309.2L922.8 310.4L924.7 312.7L923.4 315.8L919 318.4L915.3 320.2L910.9 321.2L907.7 319.2ZM911.7 337.2L914.6 335.9L917.1 335.1L917.8 337.8L915.9 340.3L913.4 341.8L912.1 339.7ZM883.2 341.6L885.1 335.9L888.3 338.4L890.1 340.3L888.6 342.8L885.7 342.2ZM764.5 261.7L774.1 261.1L772.1 265.1L769.7 268.1L767.1 265.7ZM769.5 278.1L772.1 274.5L773.5 275.1L771.7 279.1ZM773.1 283.7L776.7 282.1L777.1 282.9L774.1 284.1ZM850.9 294.6L853.9 293.8L853.9 296.2L851.7 296.6Z"/>
<path fill="#d0976e" d="M970.6 394.1L974.2 393.1L979.3 396.1L982.7 398.6L982.7 404.2L986.3 409.2L990.9 412.2L991.3 416.2L988.3 418.6L984.3 422.2L980.3 425.8L976.3 422.2L973.2 417.2L974.2 412.2L972.2 406.2L971.2 400.2Z"/>
<path fill="#aeb36e" d="M988.3 418.6L991.3 418.2L992.3 419.2L998.3 421.2L1000.3 424.2L1004.3 427.2L1001.3 431.2L1000.3 437.3L999.3 442.3L995.3 447.3L991.3 443.3L988.3 442.3L986.3 446.3L983.3 444.3L982.3 439.3L979.3 437.3L981.3 432.2L982.3 426.2L984.3 422.2Z"/>
<path fill="#6ea0c7" d="M1074.1 482.8L1074.7 478.4L1078.4 475.3L1080.3 474.3L1081.6 477.8L1083.5 478L1085.4 475.3L1086.6 469.6L1090.4 469.6L1093.5 467.1L1099.8 465.5L1102.9 467.7L1103.6 472.7L1104.2 476.5L1106.1 479.7L1104.2 483.4L1102.3 485.9L1100.4 488.4L1099.8 494.1L1096.7 497.2L1094.1 498.5L1092.9 495.4L1089.1 496L1086.6 497.2L1086 501.6L1082.8 504.8L1078.4 504.1L1074.1 507.9L1072.8 505.4L1071.5 500.4L1075.3 499.1L1077.8 496.6L1074.7 494.1L1074.1 492.2L1078.4 488.4L1081.6 485.3L1078.4 484.1Z"/>
<path fill="#7b9588" d="M927.2 555.7L928.5 551.9L931.6 549.4L935.4 546.9L936.7 544.4L937.9 546.3L941.7 546.9L946.7 545.7L950.5 544.4L952.4 547.5L954.2 550.7L958 551.9L959.9 554.4L958.6 558.8L956.8 561.4L953 563.2L949.2 562.6L945.4 564.5L940.4 565.7L936.7 565.7L935.4 562.6L931.6 560.7L928.5 558.8Z"/>
<path fill="#ecbe6e" d="M1124.9 512.9L1127.4 509.8L1127.4 506L1131.2 503.5L1131.8 499.7L1135.6 496.6L1138.1 495.4L1141.9 496.6L1146.3 498.5L1148.1 502.9L1152.5 501L1156.3 499.7L1160.7 500.4L1163.8 502.9L1164.7 506.3L1163.8 512.6L1163.2 518.8L1160.1 519.5L1158.8 516.3L1157.6 521.4L1155.7 523.2L1156.9 527L1155.7 531.4L1153.2 534.5L1150 534.5L1149.4 530.8L1145 530.1L1143.8 527L1139.4 524.5L1136.8 522L1134.3 518.8L1130.6 516.3L1128.1 513.8Z"/>
<path fill="#a188b8" d="M1111.7 554.6L1114.9 552.7L1116.8 549L1120.5 547.5L1123.7 545.8L1126.2 542.7L1128.7 540.4L1132.4 538.9L1135.6 537L1136.8 533.3L1140.6 532L1145 530.1L1149.4 530.8L1150 534.5L1148.1 538.9L1148.1 543.3L1146.3 547.7L1143.1 551.5L1140 553.4L1136.8 555.3L1136.2 559L1133.7 558.4L1131.2 556.5L1128.1 560.3L1126.8 564.1L1123.7 565.3L1122.4 561.5L1119.3 560.9L1116.8 562.2L1114.2 560.3L1113.6 565.3L1114.2 568.4L1112.4 570.3L1111.1 566.6L1111.7 561.5L1113 557.8Z"/>
<path fill="#e0a86e" d="M884.4 743.3L885.4 739.3L889.4 735.3L891.4 736.3L890.4 733.3L894.4 730.3L898.4 727.3L904.4 725.3L911.4 723.3L918.5 721.9L925.5 719.3L930.5 719.9L937.5 717.9L941.5 718.7L945.5 721.3L948.9 723.3L948.5 727.3L950.9 729.3L950.5 733.3L947.5 736.3L945.5 740.3L941.5 743.9L938.5 745.3L934.5 746.3L929.5 748.3L923.5 750.7L921.5 752.3L916.5 751.3L910.4 752.7L904.4 751.9L898.4 752.7L895.4 756.4L892.4 754.8L888.4 750.3L884.8 746.3Z"/>
<path fill="#c6cc6e" d="M1270.2 307.7L1271.9 305.4L1276.5 303.7L1279.7 304.6L1280.9 309.4L1275.7 313.7L1271.1 310.7Z"/>
</g></svg>
<div class="abs" style="left:716px;top:414px;width:17px;height:52px;background:#fff;border-radius:0 4px 4px 0;box-shadow:1px 2px 4px rgba(0,0,0,.35)"><i style="position:absolute;left:5px;top:23px;border:3.5px solid transparent;border-right:5px solid #777;border-left:0"></i></div>

<div id="bottom" class="abs">
<div class="btn" style="left:220px;width:86px;background:#fff;border:1px solid #ccc;color:#444;line-height:33px">초기화</div>
<div class="btn" style="left:316px;width:85px;background:#6b6b6b;color:#fff">다운로드</div>
<div class="btn" style="left:411px;width:86px;background:#1a78d0;color:#fff">입력적용</div>
</div>
</body>
</html>
